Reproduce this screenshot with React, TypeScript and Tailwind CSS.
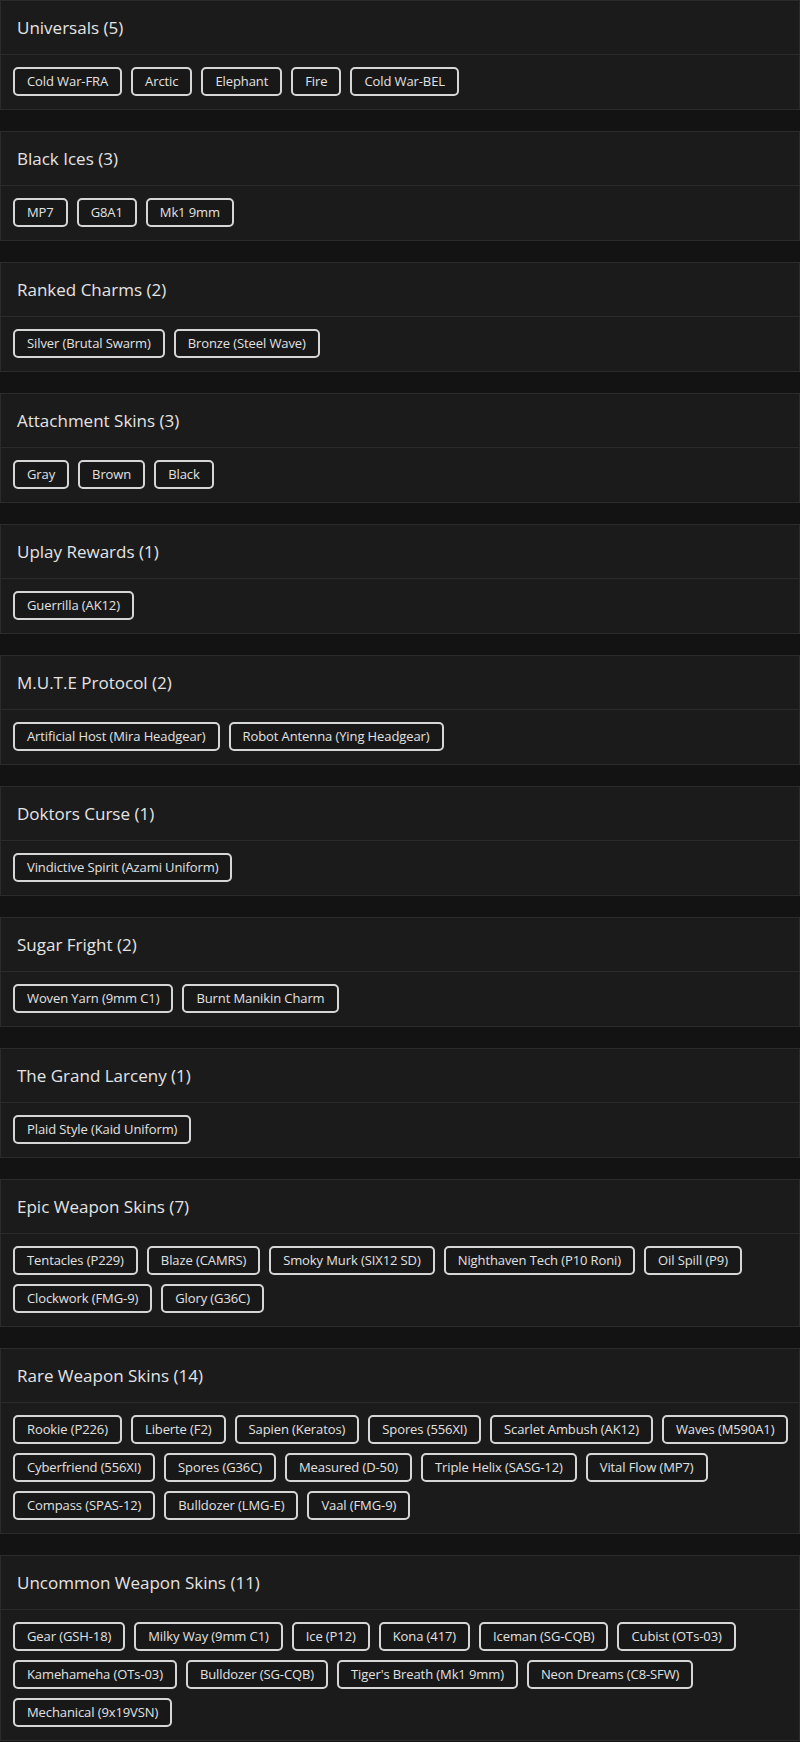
import { FC } from 'react';

type Section = { title: string; items: string[] };

const sections: Section[] = [
  { title: 'Universals', items: ['Cold War-FRA', 'Arctic', 'Elephant', 'Fire', 'Cold War-BEL'] },
  { title: 'Black Ices', items: ['MP7', 'G8A1', 'Mk1 9mm'] },
  { title: 'Ranked Charms', items: ['Silver (Brutal Swarm)', 'Bronze (Steel Wave)'] },
  { title: 'Attachment Skins', items: ['Gray', 'Brown', 'Black'] },
  { title: 'Uplay Rewards', items: ['Guerrilla (AK12)'] },
  { title: 'M.U.T.E Protocol', items: ['Artificial Host (Mira Headgear)', 'Robot Antenna (Ying Headgear)'] },
  { title: 'Doktors Curse', items: ['Vindictive Spirit (Azami Uniform)'] },
  { title: 'Sugar Fright', items: ['Woven Yarn (9mm C1)', 'Burnt Manikin Charm'] },
  { title: 'The Grand Larceny', items: ['Plaid Style (Kaid Uniform)'] },
  {
    title: 'Epic Weapon Skins',
    items: [
      'Tentacles (P229)',
      'Blaze (CAMRS)',
      'Smoky Murk (SIX12 SD)',
      'Nighthaven Tech (P10 Roni)',
      'Oil Spill (P9)',
      'Clockwork (FMG-9)',
      'Glory (G36C)',
    ],
  },
  {
    title: 'Rare Weapon Skins',
    items: [
      'Rookie (P226)',
      'Liberte (F2)',
      'Sapien (Keratos)',
      'Spores (556XI)',
      'Scarlet Ambush (AK12)',
      'Waves (M590A1)',
      'Cyberfriend (556XI)',
      'Spores (G36C)',
      'Measured (D-50)',
      'Triple Helix (SASG-12)',
      'Vital Flow (MP7)',
      'Compass (SPAS-12)',
      'Bulldozer (LMG-E)',
      'Vaal (FMG-9)',
    ],
  },
  {
    title: 'Uncommon Weapon Skins',
    items: [
      'Gear (GSH-18)',
      'Milky Way (9mm C1)',
      'Ice (P12)',
      'Kona (417)',
      'Iceman (SG-CQB)',
      'Cubist (OTs-03)',
      'Kamehameha (OTs-03)',
      'Bulldozer (SG-CQB)',
      "Tiger's Breath (Mk1 9mm)",
      'Neon Dreams (C8-SFW)',
      'Mechanical (9x19VSN)',
    ],
  },
];

const SectionCard: FC<{ section: Section }> = ({ section }) => (
  <div className="border border-[#2b2b2b] bg-[#1b1b1b]">
    <div className="flex h-[54px] items-center border-b border-[#2b2b2b] px-4">
      <h2 className="text-[17px] font-medium text-[#e4e4e4]">
        {section.title} ({section.items.length})
      </h2>
    </div>
    <div className="flex flex-wrap gap-[9px] pt-3 pr-0 pb-[13px] pl-3">
      {section.items.map((item) => (
        <span
          key={item}
          className="flex h-[29px] items-center rounded-[5px] border-2 border-[#d6d6d6] bg-[#181818] px-3 text-[13px] tracking-[-0.1px] text-[#e2e2e2]"
        >
          {item}
        </span>
      ))}
    </div>
  </div>
);

const App: FC = () => {
  return (
    <div
      className="min-h-screen bg-[#131313]"
      style={{ fontFamily: '"Open Sans", "Noto Sans", sans-serif' }}
    >
      <div className="flex flex-col gap-[21px]">
        {sections.map((s) => (
          <SectionCard key={s.title} section={s} />
        ))}
      </div>
    </div>
  );
};

export default App;
